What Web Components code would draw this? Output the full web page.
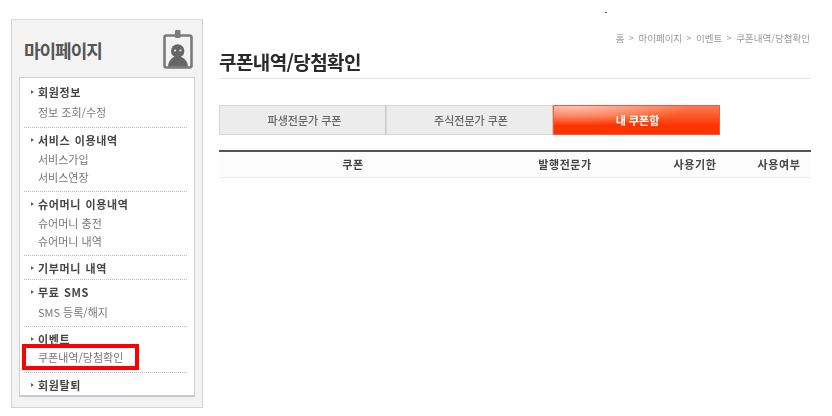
<!DOCTYPE html>
<html lang="ko">
<head>
<meta charset="utf-8">
<title>쿠폰내역/당첨확인</title>
<style>
  html, body { margin: 0; background: #fff; }
  body {
    width: 832px;
    height: 416px;
    overflow: hidden;
    font-family: "Noto Sans CJK KR", "Liberation Sans", sans-serif;
  }
</style>
</head>
<body>
<my-page>
  <side-nav slot="side" heading="마이페이지">
    <nav-group label="회원정보" style="--gap: 2px">
      <nav-link>정보 조회/수정</nav-link>
    </nav-group>
    <nav-group label="서비스 이용내역" style="--gap: 1px; --tail: 5px">
      <nav-link>서비스가입</nav-link>
      <nav-link>서비스연장</nav-link>
    </nav-group>
    <nav-group label="슈어머니 이용내역" style="--gap: 1px; --tail: 5px">
      <nav-link>슈어머니 충전</nav-link>
      <nav-link>슈어머니 내역</nav-link>
    </nav-group>
    <nav-group label="기부머니 내역" style="--tail: 2px"></nav-group>
    <nav-group label="무료 SMS" style="--gap: 2px; --tail: 5px">
      <nav-link>SMS 등록/해지</nav-link>
    </nav-group>
    <nav-group label="이벤트">
      <nav-link marked>쿠폰내역/당첨확인</nav-link>
    </nav-group>
    <nav-group label="회원탈퇴" last></nav-group>
  </side-nav>
  <coupon-main>
    <bread-crumb items="홈,마이페이지,이벤트,쿠폰내역/당첨확인"></bread-crumb>
    <h-title>쿠폰내역/당첨확인</h-title>
    <tab-bar>
      <tab-item style="--shift: 4px">파생전문가 쿠폰</tab-item>
      <tab-item style="--shift: 3px">주식전문가 쿠폰</tab-item>
      <tab-item style="--shift: 2px" active>내 쿠폰함</tab-item>
    </tab-bar>
    <coupon-table></coupon-table>
  </coupon-main>
</my-page>

<script>
  const FONT = '"Noto Sans CJK KR", "Liberation Sans", sans-serif';

  class MyPage extends HTMLElement {
    constructor() {
      super();
      this.attachShadow({ mode: 'open' });
      this.shadowRoot.innerHTML = `
        <style>
          :host { display: flex; align-items: flex-start; gap: 16px; padding: 19px 21px 0 11px; position: relative; filter: blur(0.3px); }
          ._speck { position: absolute; left: 605px; top: 12px; width: 2px; height: 1px; background: #555; }
        </style>
        <slot name="side"></slot>
        <slot></slot>
        <div class="_speck"></div>
      `;
    }
  }

  class SideNav extends HTMLElement {
    constructor() {
      super();
      this.attachShadow({ mode: 'open' });
      this.shadowRoot.innerHTML = `
        <style>
          :host {
            display: block; box-sizing: border-box; width: 192px; height: 389px;
            background: #f3f3f3; border: 1px solid #d2d2d2; border-top-color: #dcdcdc;
            padding: 0 7px; flex: none;
          }
          ._head { display: flex; align-items: center; justify-content: space-between; height: 57px; padding: 0 2px 0 5px; }
          h2 { margin: 3px 0 0; font: 700 18px/1 ${FONT}; color: #555; letter-spacing: -1px; }
          svg { display: block; margin-top: 1px; }
          ._box {
            box-sizing: border-box; height: 320px; background: #fff;
            border: 1px solid #cfcfcf; border-bottom: 2px solid #c8c8c8; padding: 2px 7px 0 4px;
          }
        </style>
        <div class="_head">
          <h2>${this.getAttribute('heading')}</h2>
          <svg width="30" height="39" viewBox="0 0 30 39">
            <rect x="1.5" y="5.5" width="27" height="32" rx="2" fill="#f3f3f3" stroke="#7a7a7a" stroke-width="2.6"/>
            <rect x="12" y="0" width="5.5" height="8" rx="1" fill="#7a7a7a"/>
            <path d="M5 36.5 C5.5 30 9 28 12 26.5 H17 C20.5 28 24.5 30 25 36.5 Z" fill="#666"/>
            <circle cx="14.7" cy="21" r="6.7" fill="#666"/>
            <circle cx="12" cy="20.5" r="1.1" fill="#e6e6e6"/>
            <circle cx="17.4" cy="20.5" r="1.1" fill="#e6e6e6"/>
          </svg>
        </div>
        <div class="_box"><slot></slot></div>
      `;
    }
  }

  class NavGroup extends HTMLElement {
    constructor() {
      super();
      this.attachShadow({ mode: 'open' });
      this.shadowRoot.innerHTML = `
        <style>
          :host { display: block; padding: 3px 0 var(--tail, 6px); border-bottom: 1px dotted #bbb; }
          :host([last]) { border-bottom: 0; }
          ._label {
            display: flex; align-items: center; gap: 4px; height: 18px; padding-left: 7px;
            font: 700 11px/18px ${FONT}; color: #444; letter-spacing: 0.6px; word-spacing: 1px;
          }
          ._label::before {
            content: ""; width: 0; height: 0;
            border-left: 3px solid #666; border-top: 2.5px solid transparent; border-bottom: 2.5px solid transparent;
          }
          ._links { display: flex; flex-direction: column; align-items: flex-start; padding-top: var(--gap, 0); }
        </style>
        <div class="_label">${this.getAttribute('label')}</div>
        <div class="_links"><slot></slot></div>
      `;
    }
  }

  class NavLink extends HTMLElement {
    constructor() {
      super();
      this.attachShadow({ mode: 'open' });
      this.shadowRoot.innerHTML = `
        <style>
          :host {
            display: block; height: 18px; padding-left: 14px;
            font: 400 11px/18px ${FONT}; color: #777; position: relative; white-space: nowrap;
          }
          ._mark { display: none; position: absolute; left: -2px; top: -4px; width: 117px; height: 26px; box-sizing: border-box; border: 4px solid #f00; }
          :host([marked]) ._mark { display: block; }
        </style>
        <slot></slot><div class="_mark"></div>
      `;
    }
  }

  class CouponMain extends HTMLElement {
    constructor() {
      super();
      this.attachShadow({ mode: 'open' });
      this.shadowRoot.innerHTML = `
        <style>:host { display: flex; flex-direction: column; flex: 1; min-width: 0; }</style>
        <slot></slot>
      `;
    }
  }

  class BreadCrumb extends HTMLElement {
    constructor() {
      super();
      this.attachShadow({ mode: 'open' });
      const items = this.getAttribute('items').split(',');
      this.shadowRoot.innerHTML = `
        <style>
          :host {
            display: flex; justify-content: flex-end; gap: 4.5px; height: 17px; margin-top: 10px; padding-right: 1px;
            font: 400 9.5px/18px ${FONT}; color: #999;
          }
          i { font-style: normal; font-size: 9px; }
        </style>
        ${items.map(t => `<span>${t}</span>`).join('<i>&gt;</i>')}
      `;
    }
  }

  class HTitle extends HTMLElement {
    constructor() {
      super();
      this.attachShadow({ mode: 'open' });
      this.shadowRoot.innerHTML = `
        <style>
          :host {
            display: block; height: 32px; margin-bottom: 26px; border-bottom: 1px solid #e4e4e4;
            font: 700 19px/32px ${FONT}; color: #2a2a2a; letter-spacing: -0.6px;
          }
        </style>
        <slot></slot>
      `;
    }
  }

  class TabBar extends HTMLElement {
    constructor() {
      super();
      this.attachShadow({ mode: 'open' });
      this.shadowRoot.innerHTML = `
        <style>:host { display: flex; height: 30px; margin-bottom: 15px; }</style>
        <slot></slot>
      `;
    }
  }

  class TabItem extends HTMLElement {
    constructor() {
      super();
      this.attachShadow({ mode: 'open' });
      this.shadowRoot.innerHTML = `
        <style>
          :host {
            display: flex; align-items: center; justify-content: center; box-sizing: border-box; width: 167px;
            padding-left: var(--shift, 0);
            background: #ececec; border: 1px solid #d8d8d8; border-right-color: #c9c9c9;
            font: 500 11px/1 ${FONT}; color: #666;
          }
          :host([active]) {
            color: #fff; font-weight: 700; border-color: #ee5a3a;
            background:
              radial-gradient(ellipse 70% 70% at 12% 0, rgba(255,255,255,.55), rgba(255,255,255,0)),
              linear-gradient(#fb7a52 0, #fb5a28 35%, #ff3300 70%, #ff3300 100%);
          }
        </style>
        <slot></slot>
      `;
    }
  }

  class CouponTable extends HTMLElement {
    constructor() {
      super();
      this.attachShadow({ mode: 'open' });
      this.shadowRoot.innerHTML = `
        <style>
          :host {
            display: grid; grid-template-columns: 268px 156px 104px 64px; height: 28px; box-sizing: border-box;
            align-items: center; justify-items: center; background: #fcfcfc;
            border-top: 2px solid #555; border-bottom: 1px solid #eee;
            font: 700 11px/1 ${FONT}; color: #444; letter-spacing: 0.6px;
          }
        </style>
        <span>쿠폰</span><span>발행전문가</span><span>사용기한</span><span>사용여부</span>
      `;
    }
  }

  customElements.define('my-page', MyPage);
  customElements.define('side-nav', SideNav);
  customElements.define('nav-group', NavGroup);
  customElements.define('nav-link', NavLink);
  customElements.define('coupon-main', CouponMain);
  customElements.define('bread-crumb', BreadCrumb);
  customElements.define('h-title', HTitle);
  customElements.define('tab-bar', TabBar);
  customElements.define('tab-item', TabItem);
  customElements.define('coupon-table', CouponTable);
</script>
</body>
</html>
